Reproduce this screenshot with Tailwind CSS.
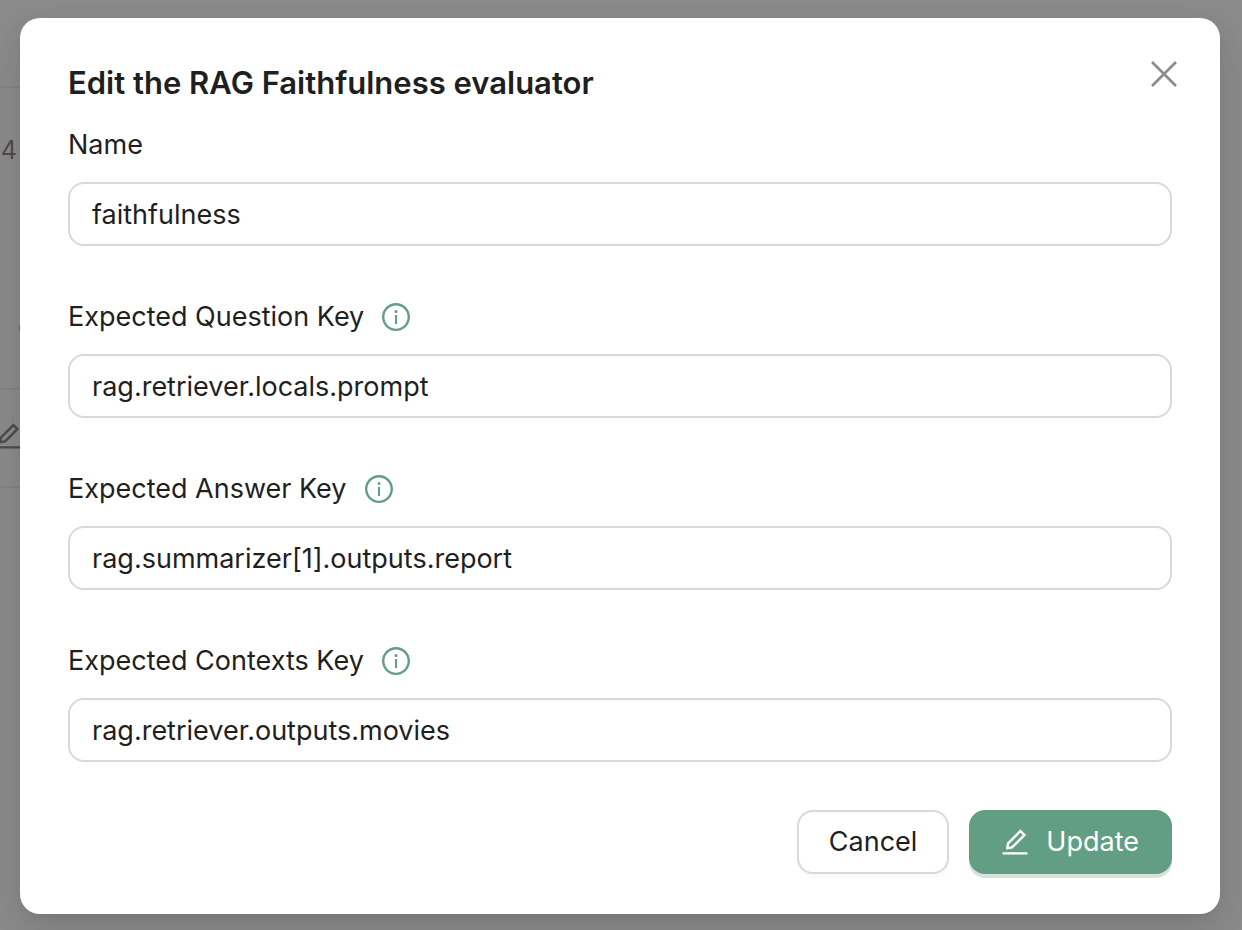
<!DOCTYPE html>
<html lang="en">
<head>
<meta charset="utf-8">
<meta name="viewport" content="width=device-width, initial-scale=1">
<title>Edit evaluator</title>
<script src="https://cdn.jsdelivr.net/npm/@tailwindcss/browser@4"></script>
</head>
<body class="relative min-h-screen overflow-hidden bg-white font-['Inter',sans-serif] text-[27px] leading-11 text-[#1f1f1f]">
<svg class="hidden" aria-hidden="true">
  <symbol id="edit" viewBox="0 0 1024 1024"><path d="M257.7 752c2 0 4-.2 6-.5L431.900 722c2-.4 3.900-1.300 5.300-2.800l423.900-423.900a9.960 9.960 0 000-14.100L694.900 114.900c-1.900-1.900-4.400-2.900-7.100-2.900s-5.200 1-7.100 2.900L256.800 538.800c-1.500 1.500-2.400 3.300-2.800 5.300l-29.500 168.200a33.500 33.500 0 009.400 29.800c6.600 6.400 14.900 9.900 23.800 9.900zm67.400-174.400L687.800 215l73.300 73.300-362.700 362.600-88.900 15.700 15.600-89zM880 836H144c-17.700 0-32 14.300-32 32v36c0 4.400 3.600 8 8 8h784c4.400 0 8-3.600 8-8v-36c0-17.700-14.300-32-32-32z"/></symbol>
  <symbol id="info" viewBox="0 0 1024 1024"><path d="M512 64C264.600 64 64 264.600 64 512s200.600 448 448 448 448-200.600 448-448S759.400 64 512 64zm0 820c-205.400 0-372-166.600-372-372s166.600-372 372-372 372 166.600 372 372-166.600 372-372 372z"/><path d="M464 336a48 48 0 1096 0 48 48 0 10-96 0zm72 112h-48c-4.400 0-8 3.600-8 8v272c0 4.400 3.600 8 8 8h48c4.400 0 8-3.600 8-8V456c0-4.400-3.600-8-8-8z"/></symbol>
</svg>

<!-- Evaluator list behind the dialog -->
<div class="absolute inset-y-0 left-0 w-1/2 overflow-hidden" aria-hidden="true">
  <div class="h-22 border-b-2 border-[#f0f0f0]"></div>
  <div class="h-[302px] border-b-2 border-[#f0f0f0] pt-10">
    <div class="-ml-[14px] text-[25px] text-[#8c8c8c]">24</div>
    <div class="mt-[150px] ml-[19px] size-3 rounded-full bg-[#a6a6a6]"></div>
  </div>
  <div class="h-[98px] border-b-2 border-[#f0f0f0] pt-[30px]">
    <svg class="-ml-2 size-8 fill-[#8c8c8c]"><use href="#edit"/></svg>
  </div>
</div>

<div class="relative min-h-screen bg-black/45 pt-[18px] pr-[22px] pb-4 pl-5 max-sm:px-2">
  <form role="dialog" aria-modal="true" aria-labelledby="title" class="relative mx-auto flex max-w-[1200px] flex-col gap-12 rounded-[20px] bg-white px-12 py-10 shadow-[0_12px_32px_0_rgba(0,0,0,0.08),0_6px_12px_-8px_rgba(0,0,0,0.12),0_18px_56px_16px_rgba(0,0,0,0.05)]">
    <button type="button" aria-label="Close" class="absolute top-10 right-10 grid size-8 place-items-center text-[#8c8c8c]">
      <svg class="size-8" viewBox="0 0 32 32" fill="none" stroke="currentColor" stroke-width="2.700"><path d="M4 4 28 28M28 4 4 28"/></svg>
    </button>

    <div class="flex flex-col gap-4">
      <h1 id="title" class="pt-0.5 text-[31px] leading-[46px] font-semibold">Edit the RAG Faithfulness evaluator</h1>
      <div class="flex flex-col gap-4">
        <label for="name" class="pt-0.5 leading-[42px]">Name</label>
        <input id="name" type="text" value="faithfulness" class="h-16 w-full rounded-2xl border-2 border-[#d9d9d9] bg-white px-[22px]">
      </div>
    </div>

    <div class="flex flex-col gap-[15px]">
      <label for="question" class="flex items-center gap-4 pt-px">Expected Question Key <svg class="size-8 fill-[#629e84]" aria-hidden="true"><use href="#info"/></svg></label>
      <input id="question" type="text" value="rag.retriever.locals.prompt" class="h-16 w-full rounded-2xl border-2 border-[#d9d9d9] bg-white px-[22px]">
    </div>

    <div class="flex flex-col gap-[15px]">
      <label for="answer" class="flex items-center gap-4 pt-px">Expected Answer Key <svg class="size-8 fill-[#629e84]" aria-hidden="true"><use href="#info"/></svg></label>
      <input id="answer" type="text" value="rag.summarizer[1].outputs.report" class="h-16 w-full rounded-2xl border-2 border-[#d9d9d9] bg-white px-[22px]">
    </div>

    <div class="flex flex-col gap-[15px]">
      <label for="contexts" class="flex items-center gap-4 pt-px">Expected Contexts Key <svg class="size-8 fill-[#629e84]" aria-hidden="true"><use href="#info"/></svg></label>
      <input id="contexts" type="text" value="rag.retriever.outputs.movies" class="h-16 w-full rounded-2xl border-2 border-[#d9d9d9] bg-white px-[22px]">
    </div>

    <div class="flex justify-end gap-5">
      <button type="button" class="h-16 rounded-2xl border-2 border-[#d9d9d9] bg-white px-[30px] shadow-[0_4px_0_rgba(0,0,0,0.02)]">Cancel</button>
      <button type="submit" class="flex h-16 items-center gap-[15px] rounded-2xl bg-[#629e84] pr-[33px] pl-[30px] text-white shadow-[0_4px_0_#d9e2db]"><svg class="size-8 fill-white" aria-hidden="true"><use href="#edit"/></svg>Update</button>
    </div>
  </form>
</div>
</body>
</html>
